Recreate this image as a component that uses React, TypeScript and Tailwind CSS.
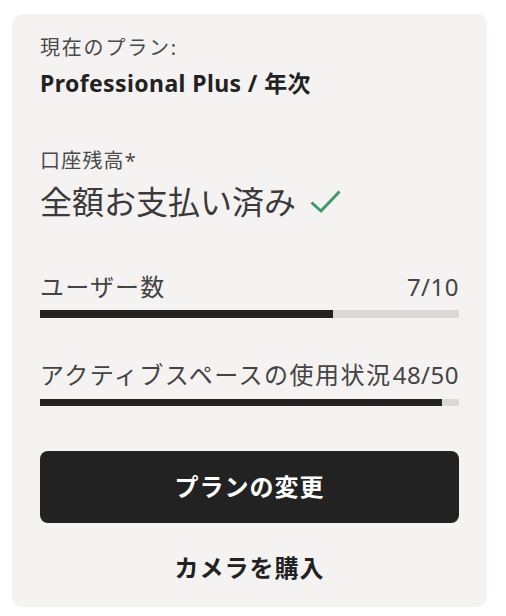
import React from "react";

const font = { fontFamily: "'Noto Sans', 'Noto Sans CJK JP', sans-serif" };

function Bar({ pct, h }: { pct: number; h: string }) {
  return (
    <div className={`w-full bg-[#d9d9d9] ${h}`}>
      <div className="h-full bg-[#222222]" style={{ width: `${pct}%` }} />
    </div>
  );
}

export default function App() {
  return (
    <div className="min-h-[616px] bg-white pt-[14px] pl-[12px]" style={font}>
      <div className="w-[475px] h-[593px] rounded-[10px] bg-[#f4f3f2] px-[28px] pt-[20px] flex flex-col">
        <div className="text-[20px] leading-[28px] text-[#4a4a4a] tracking-[1.8px]">現在のプラン:</div>
        <div className="mt-[6px] text-[23px] leading-[30px] font-bold text-[#222222] tracking-[0.4px]">Professional Plus / 年次</div>

        <div className="mt-[49px] text-[20px] leading-[28px] text-[#4a4a4a] tracking-[1.2px]">口座残高*</div>
        <div className="mt-[7px] flex items-center h-[40px]">
          <span className="text-[32px] leading-[40px] text-[#3a3a3a]">全額お支払い済み</span>
          <svg className="ml-[14px]" width="31" height="24" viewBox="0 0 31 24" fill="none">
            <path d="M1.5 12.5 L11 21 L29.5 1.5" stroke="#3d9a6b" strokeWidth="3" strokeLinejoin="miter" />
          </svg>
        </div>

        <div className="mt-[49px] flex justify-between text-[24px] leading-[32px] text-[#444444]">
          <span className="tracking-[1.2px]">ユーザー数</span>
          <span className="tracking-[0.5px]">7/10</span>
        </div>
        <div className="mt-[7px]">
          <Bar pct={70} h="h-[8px]" />
        </div>

        <div className="mt-[41px] flex justify-between text-[24px] leading-[32px] text-[#444444] whitespace-nowrap">
          <span className="tracking-[1.5px]">アクティブスペースの使用状況</span>
          <span className="tracking-[0.5px]">48/50</span>
        </div>
        <div className="mt-[8px]">
          <Bar pct={96} h="h-[7px]" />
        </div>

        <button className="mt-[45px] h-[72px] w-full rounded-[8px] bg-[#222222] text-white text-[24px] font-bold tracking-[1px]">
          プランの変更
        </button>
        <button className="mt-[29px] h-[32px] w-full text-[#222222] text-[24px] font-bold leading-[32px] tracking-[1px]">
          カメラを購入
        </button>
      </div>
    </div>
  );
}
